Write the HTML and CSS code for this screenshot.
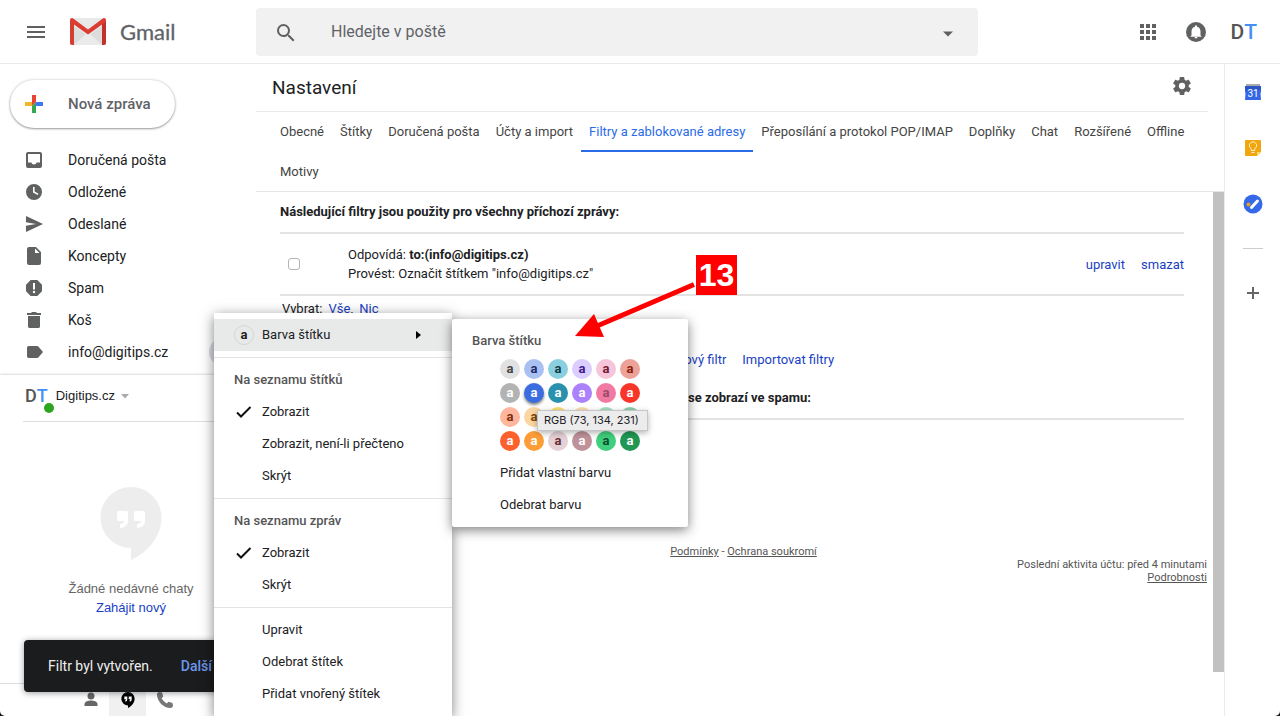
FILE: index.html
```html
<!DOCTYPE html>
<html lang="cs">
<head>
<meta charset="utf-8">
<title>Gmail – Nastavení</title>
<link rel="stylesheet" href="styles.css">
</head>
<body>
<div class="app">
  <header class="topbar">
    <div class="brand">
      <button class="icon-btn" aria-label="Hlavní nabídka"><svg width="24" height="24" viewBox="0 0 24 24" fill="#5f6060"><path d="M3 18h18v-2H3zm0-5h18v-2H3zm0-7v2h18V6z"/></svg></button>
      <svg class="gmail-logo" width="36" height="27" viewBox="0 0 36 27"><rect width="36" height="27" rx="2" fill="#e9e9e9"/><path d="M4 8 18 18 32 8V27H4z" fill="#dcdcdc"/><path d="M4 27 16 16h4l12 11z" fill="#ebebeb"/><path d="M0 2v23a2 2 0 0 0 2 2h2V5z" fill="#d23f31"/><path d="M36 2v23a2 2 0 0 1-2 2h-2V5z" fill="#c0322b"/><path d="M2 0a2 2 0 0 0-2 2c0 1 .3 2 1.500 2.800L18 16.500 34.500 4.800C35.700 4 36 3 36 2a2 2 0 0 0-3.200-1.600L18 11.400 3.200.4Q2.700 0 2 0z" fill="#dd3c32"/></svg>
      <span class="brand-name">Gmail</span>
    </div>
    <form class="search">
      <button type="button" class="icon-btn" aria-label="Hledat"><svg width="24" height="24" viewBox="0 0 24 24" fill="#606161"><path d="M15.500 14h-.79l-.28-.27A6.470 6.470 0 0 0 16 9.500 6.500 6.500 0 1 0 9.500 16c1.610 0 3.090-.59 4.230-1.570l.27.28v.79l5 4.990L20.490 19zm-6 0a4.500 4.500 0 1 1 0-9 4.500 4.500 0 0 1 0 9z" transform="translate(0 1)"/></svg></button>
      <input type="text" class="search-input" placeholder="Hledejte v poště" aria-label="Hledejte v poště">
      <button type="button" class="icon-btn" aria-label="Možnosti vyhledávání"><svg width="24" height="24" viewBox="0 0 24 24" fill="#5f6060"><path d="M7 11.500l5 5 5-5z"/></svg></button>
    </form>
    <div class="account">
      <button class="icon-btn" aria-label="Aplikace Google"><svg width="24" height="24" viewBox="0 0 24 24" fill="#606161"><path d="M4 8h4V4H4zm6 12h4v-4h-4zm-6 0h4v-4H4zm0-6h4v-4H4zm6 0h4v-4h-4zm6-10v4h4V4zm-6 4h4V4h-4zm6 6h4v-4h-4zm0 6h4v-4h-4z"/></svg></button>
      <button class="icon-btn bell" aria-label="Oznámení"><svg width="24" height="24" viewBox="0 0 24 24"><circle cx="12" cy="12" r="10" fill="#606161"/><path d="M12 18.500a1.500 1.500 0 0 0 1.500-1.400h-3A1.500 1.500 0 0 0 12 18.500zm4.500-3.100v-4.200c0-2.200-1.400-4-3.500-4.500v-.4a1 1 0 0 0-2 0v.4c-2.100.5-3.500 2.300-3.500 4.500v4.200l-1 .9v.4h11v-.4z" fill="#fff"/></svg></button>
      <span class="dt dt-large"><b>D</b><b class="dt-t">T</b></span>
    </div>
  </header>

  <div class="body">
    <aside class="sidebar">
      <button class="compose"><svg width="18" height="18" viewBox="0 0 18 18"><path d="M7 0h4v7L7 11z" fill="#ea4335"/><path d="M0 7h7v4H0z" fill="#f5b32b"/><path d="M7 11l4-4v11H7z" fill="#34a853"/><path d="M11 7h7v4h-7z" fill="#3c7af5"/></svg>Nová zpráva</button>
      <nav class="folders">
        <a href="#"><svg viewBox="0 0 20 20"><path d="M16 2H4a2 2 0 0 0-2 2v12a2 2 0 0 0 2 2h12a2 2 0 0 0 2-2V4a2 2 0 0 0-2-2zm0 10.500h-3.300a2.800 2.800 0 0 1-5.400 0H4V4h12z"/></svg>Doručená pošta</a>
        <a href="#"><svg viewBox="0 0 20 20"><path d="M10 2a8 8 0 1 0 0 16 8 8 0 0 0 0-16zm3.700 11L9 10.500V5h1.600v4.600l3.900 2.100z"/></svg>Odložené</a>
        <a href="#"><svg viewBox="0 0 20 20"><path d="M2 18l17-8L2 2v6.200L12 10 2 11.800z"/></svg>Odeslané</a>
        <a href="#"><svg viewBox="0 0 20 20"><path d="M5 1a2 2 0 0 0-2 2v14a2 2 0 0 0 2 2h10a2 2 0 0 0 2-2V6l-5-5zm6 6V2.500L15.500 7z"/></svg>Koncepty</a>
        <a href="#"><svg viewBox="0 0 20 20"><path d="M13.300 2H6.700L2 6.700v6.600L6.700 18h6.600l4.700-4.700V6.700zM10 15.200a1.200 1.200 0 1 1 0-2.400 1.200 1.200 0 0 1 0 2.400zM11 11.500H9V5h2z"/></svg>Spam</a>
        <a href="#"><svg viewBox="0 0 20 20"><path d="M4 16.500A1.700 1.700 0 0 0 5.700 18h8.600a1.700 1.700 0 0 0 1.700-1.500V6H4zM17 3h-4l-1-1H8L7 3H3v2h14z"/></svg>Koš</a>
        <a href="#"><svg viewBox="0 0 20 20"><path d="M14.500 4.700A1.700 1.700 0 0 0 13 4H4.700A1.700 1.700 0 0 0 3 5.700v8.600A1.700 1.700 0 0 0 4.700 16H13a1.700 1.700 0 0 0 1.500-.7L19 10z"/></svg>info@digitips.cz<span class="more"></span></a>
      </nav>

      <section class="chat">
        <button class="chat-user"><span class="dt"><b>D</b><b class="dt-t">T</b><i class="presence"></i></span>Digitips.cz<svg width="8" height="5" viewBox="0 0 8 5"><path d="M0 0h8L4 4.500z" fill="#aaa"/></svg></button>
        <div class="chat-empty">
          <svg width="62" height="74" viewBox="0 0 62 74"><path d="M31 0a30.500 30.500 0 1 0 0 61v12c18-8 30.500-25 30.500-42.500A30.500 30.500 0 0 0 31 0z" fill="#ededed"/><path d="M18.500 24h8q1.500 0 1.500 1.500V34q0 6-8 7v-4q4-.5 4-3h-5.500q-1.500 0-1.500-1.500v-7q0-1.500 1.500-1.500zM35.500 24h8q1.500 0 1.500 1.500V34q0 6-8 7v-4q4-.5 4-3h-5.500q-1.500 0-1.500-1.500v-7q0-1.500 1.500-1.500z" fill="#fff"/></svg>
          <p>Žádné nedávné chaty</p>
          <a href="#">Zahájit nový</a>
        </div>
        <div class="chat-tabs">
          <button aria-label="Kontakty"><svg width="16" height="16" viewBox="0 0 16 16" fill="#666"><circle cx="8" cy="4" r="3.500"/><path d="M1.500 14v-2c0-2.400 4-3.500 6.500-3.500s6.500 1.100 6.500 3.500v2z"/></svg></button>
          <button class="active" aria-label="Chat"><svg width="16" height="16" viewBox="0 0 16 16"><path d="M8 0a6.500 6.500 0 0 0 0 13.400V16c4-2 6.600-5.500 6.600-9.300A6.600 6.600 0 0 0 8 0z"/><path d="M4.300 4.500h3v3q0 2-2 2.300V8q.7 0 .8-.8H4.300zM8.700 4.500h3v3q0 2-2 2.300V8q.7 0 .8-.8H8.700z" fill="#fff"/></svg></button>
          <button aria-label="Telefon"><svg width="18" height="18" viewBox="0 0 18 18" fill="#777"><path d="M3.600 1 6 1.500l1.300 4L5.500 7.300a14 14 0 0 0 5.200 5.200l1.800-1.800 4 1.300.5 2.500c0 1.300-1.200 2.500-2.500 2.500C7.500 17 1 10.500 1 3.500 1 2.200 2.300 1 3.600 1z"/></svg></button>
        </div>
      </section>
    </aside>

    <main class="main">
      <div class="title-row"><h1>Nastavení</h1><button class="icon-btn" aria-label="Nastavení"><svg width="18" height="18" viewBox="2 2 20 20" fill="#606161"><path d="M19.430 12.980c.04-.32.070-.64.070-.98s-.03-.66-.07-.98l2.110-1.650c.19-.15.240-.42.120-.64l-2-3.460c-.12-.22-.39-.3-.61-.22l-2.490 1c-.52-.4-1.080-.73-1.690-.98l-.38-2.650A.488.488 0 0 0 14 2h-4c-.25 0-.46.18-.49.420l-.38 2.650c-.61.250-1.170.590-1.690.980l-2.490-1c-.23-.09-.49 0-.61.220l-2 3.460c-.13.220-.07.490.120.640l2.110 1.650c-.04.320-.07.650-.07.980s.03.660.070.980l-2.110 1.650c-.19.150-.24.420-.12.640l2 3.460c.12.220.39.300.61.220l2.490-1c.52.400 1.080.730 1.690.980l.38 2.650c.03.240.24.420.49.420h4c.25 0 .46-.18.49-.42l.38-2.650c.61-.25 1.170-.59 1.690-.98l2.490 1c.23.090.49 0 .61-.22l2-3.460c.12-.22.070-.49-.12-.64zM12 15.500a3.500 3.500 0 1 1 0-7 3.500 3.500 0 0 1 0 7z"/></svg></button></div>
      <nav class="tabs">
        <a href="#">Obecné</a><a href="#">Štítky</a><a href="#">Doručená pošta</a><a href="#">Účty a import</a><a href="#" class="current">Filtry a zablokované adresy</a><a href="#">Přeposílání a protokol POP/IMAP</a><a href="#">Doplňky</a><a href="#">Chat</a><a href="#">Rozšířené</a><a href="#">Offline</a><a href="#">Motivy</a>
      </nav>
      <div class="scroller">
        <div class="content">
          <h2>Následující filtry jsou použity pro všechny příchozí zprávy:</h2>
          <table class="filters">
            <tr>
              <td class="check"><input type="checkbox" aria-label="Vybrat filtr"></td>
              <td>Odpovídá: <b>to:(info@digitips.cz)</b><br>Provést: Označit štítkem "info@digitips.cz"</td>
              <td class="actions"><a href="#">upravit</a><a href="#">smazat</a></td>
            </tr>
          </table>
          <p class="select">Vybrat: <a href="#">Vše</a>, <a href="#">Nic</a></p>
          <p class="create"><a href="#">Vytvořit nový filtr</a><a href="#">Importovat filtry</a></p>
          <h2 class="blocked">Následující e-mailové adresy jsou zablokovány. Zprávy z těchto adres se zobrazí ve spamu:</h2>
          <footer class="footer">
            <p class="legal"><a href="#">Podmínky</a> - <a href="#">Ochrana soukromí</a></p>
            <p class="activity">Poslední aktivita účtu: před 4 minutami<br><a href="#">Podrobnosti</a></p>
          </footer>
        </div>
        <div class="scrollbar"></div>
      </div>
    </main>

    <aside class="rail">
      <button aria-label="Kalendář"><svg width="20" height="20" viewBox="0 0 20 20"><path d="M3 2h14v4H3z" fill="#aaa"/><path d="M2 4h16v6l-.5 1 .5 7H2l.5-7-.5-1z" fill="#3367e8"/><path d="M2 4h16v4H2z" fill="#2a56c6"/><text x="10" y="15" text-anchor="middle" class="cal-day">31</text></svg></button>
      <button aria-label="Keep"><svg width="20" height="20" viewBox="0 0 20 20"><path d="M3 2h14a1 1 0 0 1 1 1v11l-4 4H3a1 1 0 0 1-1-1V3a1 1 0 0 1 1-1z" fill="#f2a60d"/><path d="M14 18v-4h4z" fill="#fbd66b"/><path d="M8.300 12.500v-1.800a3.600 3.600 0 1 1 3.400 0v1.800zM8.500 14.500h3" fill="none" stroke="#fff3d6"/></svg></button>
      <button aria-label="Úkoly"><svg width="20" height="20" viewBox="0 0 20 20"><circle cx="10" cy="10" r="9.500" fill="#3569ea"/><circle cx="5.500" cy="10.500" r="2" fill="#e5a31b"/><path d="M8.500 13.500l6-6.500" stroke="#fff" stroke-width="3" stroke-linecap="round"/></svg></button>
      <hr>
      <button aria-label="Doplňky"><svg width="20" height="20" viewBox="0 0 20 20"><path d="M10 4v12M4 10h12" stroke="#666" stroke-width="2"/></svg></button>
    </aside>
  </div>

  <div class="toast" role="status"><span>Filtr byl vytvořen.</span><a href="#">Další informace</a></div>

  <div class="menu label-menu">
    <button class="hover"><span class="swatch sample">a</span>Barva štítku<svg class="arrow" width="5" height="8" viewBox="0 0 5 8"><path d="M0 0l5 4-5 4z"/></svg></button>
    <hr>
    <h3>Na seznamu štítků</h3>
    <button><svg class="tick" width="16" height="14" viewBox="0 0 16 14"><path d="M1 7.500l4 4L14.500 2"/></svg>Zobrazit</button>
    <button>Zobrazit, není-li přečteno</button>
    <button>Skrýt</button>
    <hr>
    <h3>Na seznamu zpráv</h3>
    <button><svg class="tick" width="16" height="14" viewBox="0 0 16 14"><path d="M1 7.500l4 4L14.500 2"/></svg>Zobrazit</button>
    <button>Skrýt</button>
    <hr>
    <button>Upravit</button>
    <button>Odebrat štítek</button>
    <button>Přidat vnořený štítek</button>
  </div>

  <div class="menu color-menu">
    <h3>Barva štítku</h3>
    <div class="palette">
      <button class="swatch" style="background:#e1e1e1;color:#464646">a</button><button class="swatch" style="background:#a9c1f1;color:#1c2a6b">a</button><button class="swatch" style="background:#89cfdd;color:#0d3b44">a</button><button class="swatch" style="background:#dccdff;color:#3d188e">a</button><button class="swatch" style="background:#f7c5d9;color:#711a36">a</button><button class="swatch" style="background:#eca298;color:#8a1c0a">a</button>
      <button class="swatch" style="background:#b3b3b3;color:#fff">a</button><button class="swatch picked" style="background:#3c6de0;color:#fff">a</button><button class="swatch" style="background:#2991ae;color:#fff">a</button><button class="swatch" style="background:#ab82fc;color:#fff">a</button><button class="swatch" style="background:#f07aa4;color:#994a64">a</button><button class="swatch" style="background:#f83528;color:#fff">a</button>
      <button class="swatch" style="background:#ffb69d;color:#7a2e0b">a</button><button class="swatch" style="background:#fcd6a2;color:#7a4706">a</button><button class="swatch" style="background:#f8dd6d" aria-label="Žlutá"></button><button class="swatch" style="background:#fbdcac" aria-label="Písková"></button><button class="swatch" style="background:#a0e0bd" aria-label="Mátová"></button><button class="swatch" style="background:#8ccdaa" aria-label="Světle zelená"></button>
      <button class="swatch" style="background:#fc612d;color:#fff">a</button><button class="swatch" style="background:#fd9d38;color:#fff">a</button><button class="swatch" style="background:#e5d1d5;color:#662e37">a</button><button class="swatch" style="background:#bf929b;color:#fff">a</button><button class="swatch" style="background:#3fcf7d;color:#0b4f30">a</button><button class="swatch" style="background:#209854;color:#fff">a</button>
    </div>
    <button>Přidat vlastní barvu</button>
    <button>Odebrat barvu</button>
    <div class="tooltip" role="tooltip">RGB (73, 134, 231)</div>
  </div>

  <svg class="pointer" width="125" height="58" viewBox="0 0 125 58"><path d="M119 3.500L22 45" stroke="#f00" stroke-width="5"/><path d="M0 55L19 33 29 56z" fill="#f00"/></svg>
  <div class="step">13</div>
</div>
</body>
</html>
```
FILE: styles.css
```css
* { box-sizing: border-box; }
html { background: #111; }
body { margin: 0; font: 13px/20px Roboto, "Noto Sans", sans-serif; color: #202124; }
button, input { font: inherit; color: inherit; }
button { border: 0; padding: 0; background: none; cursor: pointer; }
a { color: #1a3fc4; text-decoration: none; }
p, h1, h2, h3 { margin: 0; }
svg { display: block; flex: none; }

.app { position: relative; display: flex; flex-direction: column; height: 100vh; overflow: hidden; background: #fff; border-radius: 0 0 5px 5px; }
.icon-btn { display: grid; place-items: center; width: 24px; height: 24px; }

.topbar { display: flex; align-items: center; height: 64px; flex: none; border-bottom: 1px solid #ebebeb; }
.brand { display: flex; align-items: center; width: 256px; padding-left: 24px; flex: none; }
.gmail-logo { margin-left: 22px; }
.brand-name { margin-left: 14px; font: 22px/28px Lato, sans-serif; color: #5f6368; -webkit-text-stroke: 0.3px #5f6368; }
.search { display: flex; align-items: center; flex: 0 1 722px; height: 48px; padding: 0 18px; background: #f1f1f1; border-radius: 4px; }
.search-input { flex: 1; min-width: 0; margin-left: 33px; padding: 0; border: 0; background: none; font-size: 16px; outline: 0; }
.search-input::placeholder { color: #5f6368; opacity: 1; }
.account { display: flex; align-items: center; margin-left: auto; padding-right: 23px; }
.bell { margin: 0 22px 0 24px; }
.dt { position: relative; display: inline-flex; font-size: 18px; line-height: 24px; color: #555; }
.dt b { font-weight: 500; }
.dt .dt-t { color: #4490f5; }
.dt-large { font-size: 21px; }

.body { display: flex; flex: 1; min-height: 0; }
.sidebar { display: flex; flex-direction: column; width: 256px; flex: none; }
.compose { display: flex; align-items: center; gap: 25px; align-self: flex-start; margin: 16px 0 16px 10px; height: 48px; padding: 0 24px 0 15px; border-radius: 24px; font-size: 15px; font-weight: 500; color: #5f6368; box-shadow: 0 1px 2px rgba(60,64,67,.45), 0 0 3px rgba(60,64,67,.25); }
.folders a { position: relative; display: flex; align-items: center; gap: 24px; height: 32px; padding-left: 24px; color: #202124; font-size: 14px; }
.folders svg { width: 20px; height: 20px; fill: #606161; }
.more { position: absolute; right: 19px; width: 28px; height: 28px; border-radius: 14px; background: #dadce0; }
.chat { display: flex; flex-direction: column; flex: 1; margin-top: 7px; font-family: "Liberation Sans", Arial, sans-serif; box-shadow: 0 -1px 2px rgba(0,0,0,.15); }
.chat-user { display: flex; align-items: center; gap: 6px; height: 47px; margin-left: 23px; padding: 0 2px 4px; border-bottom: 1px solid #ddd; }
.chat-user .dt { margin-right: 2px; font-family: Roboto, sans-serif; }
.presence { position: absolute; right: -6px; bottom: -5px; width: 10px; height: 10px; border-radius: 5px; background: #2ea51e; }
.chat-empty { display: flex; flex-direction: column; align-items: center; flex: 1; padding: 65px 0 0 6px; line-height: 19px; color: #666; }
.chat-empty svg { margin-bottom: 18px; }
.chat-tabs { display: flex; height: 33px; padding-left: 72px; border-top: 1px solid #ddd; }
.chat-tabs button { display: grid; place-items: center; width: 37px; }
.chat-tabs .active { background: #f0f0f0; }

.main { display: flex; flex-direction: column; flex: 1; min-width: 0; }
.title-row { display: flex; align-items: center; justify-content: space-between; height: 48px; margin-right: 16px; padding: 0 14px 0 16px; border-bottom: 1px solid #ebebeb; flex: none; }
.title-row .icon-btn { margin-bottom: 3px; }
h1 { font-size: 19px; font-weight: 400; }
.tabs { display: flex; flex-wrap: wrap; height: 80px; padding: 0 24px 0 16px; border-bottom: 1px solid #e5e5e5; }
.tabs a { height: 40px; padding: 10px 8px 0; color: #444; }
.tabs .current { color: #2a6be8; border-bottom: 2px solid #2a6be8; }
.scroller { display: flex; flex: 1; min-height: 0; }
.scrollbar { width: 11px; height: 480px; background: #c1c1c1; flex: none; }
.content { flex: 1; padding: 10px 29px 0 24px; }
h2 { font-size: 13px; line-height: 20px; font-weight: 700; padding-bottom: 10px; border-bottom: 2px solid #e3e3e3; }
.filters { width: 100%; border-collapse: collapse; border-bottom: 2px solid #e3e3e3; line-height: 19px; }
.filters td { padding: 11px 0; }
.filters .check { width: 68px; padding-left: 8px; }
.check input { display: block; appearance: none; width: 12px; height: 12px; margin: 0; border: 1px solid #b5b5b5; border-radius: 3px; background: #fff; }
.filters .actions { text-align: right; }
.actions a { margin-left: 16px; }
.select { margin: 3px 0 0 2px; }
.select a { margin-left: 3px; }
.create { display: flex; justify-content: center; gap: 16px; margin-top: 31px; }
.blocked { margin-top: 18px; }
.footer { margin: 125px -23px 0 0; font-size: 11px; line-height: 13px; color: #555; }
.footer a { color: #555; text-decoration: underline; }
.legal { text-align: center; }
.activity { text-align: right; }

.rail { display: flex; flex-direction: column; align-items: center; width: 56px; padding-top: 18px; border-left: 1px solid #ebebeb; flex: none; }
.rail button { display: grid; place-items: center; width: 40px; height: 20px; margin-bottom: 36px; }
.rail hr { width: 20px; margin: -2px 0 34px; border: 0; border-top: 1px solid #ccc; }
.cal-day { font: 10px Roboto, sans-serif; fill: #fff; }

.toast { position: absolute; left: 24px; bottom: 24px; display: flex; align-items: center; gap: 28px; width: 330px; height: 52px; padding: 0 24px; border-radius: 4px; background: #1b1c1d; color: #eee; font-size: 14px; box-shadow: 0 1px 6px rgba(0,0,0,.4); }
.toast a { font-weight: 500; color: #6c96ee; }

.menu { position: absolute; background: #fff; box-shadow: 0 3px 12px rgba(0,0,0,.5); }
.menu > button { position: relative; display: flex; align-items: center; width: 100%; height: 32px; padding-left: 48px; padding-bottom: 1px; text-align: left; }
.menu hr { margin: 6px 0; border: 0; border-top: 1px solid #e3e3e3; }
h3 { font-size: 13px; line-height: 32px; font-weight: 500; height: 32px; padding-left: 20px; color: #555; }
.label-menu { left: 214px; top: 313px; width: 238px; padding: 6px 0; }
.hover { background: #e8eaea; }
.arrow { margin-left: auto; margin-right: 31px; }
.tick { position: absolute; left: 22px; fill: none; stroke: #111; stroke-width: 2; }
.swatch { display: grid; place-items: center; width: 20px; height: 20px; border-radius: 10px; font-size: 13px; line-height: 20px; font-weight: 700; }
.sample { position: absolute; left: 20px; border: 1px solid #d6d6d6; line-height: 18px; }
.color-menu { left: 452px; top: 319px; width: 236px; padding: 6px 0; border-radius: 2px; }
.palette { display: grid; grid-template-columns: repeat(6, 20px); gap: 4px; padding: 2px 48px 6px; }
.picked { box-shadow: 0 2px 3px rgba(0,0,0,.5); }
.tooltip { position: absolute; left: 85px; top: 91px; height: 21px; padding: 0 8px 0 6px; border: 1px solid #c6c6c6; background: #ececec; font: 11px/19px Inter, sans-serif; white-space: nowrap; box-shadow: 0 2px 6px rgba(0,0,0,.3); }
.pointer { position: absolute; left: 575px; top: 281px; }
.step { position: absolute; left: 696px; top: 255px; width: 41px; height: 40px; background: #f00; color: #fff; font: bold 32px/40px "Liberation Sans", Arial, sans-serif; text-align: center; }
```
